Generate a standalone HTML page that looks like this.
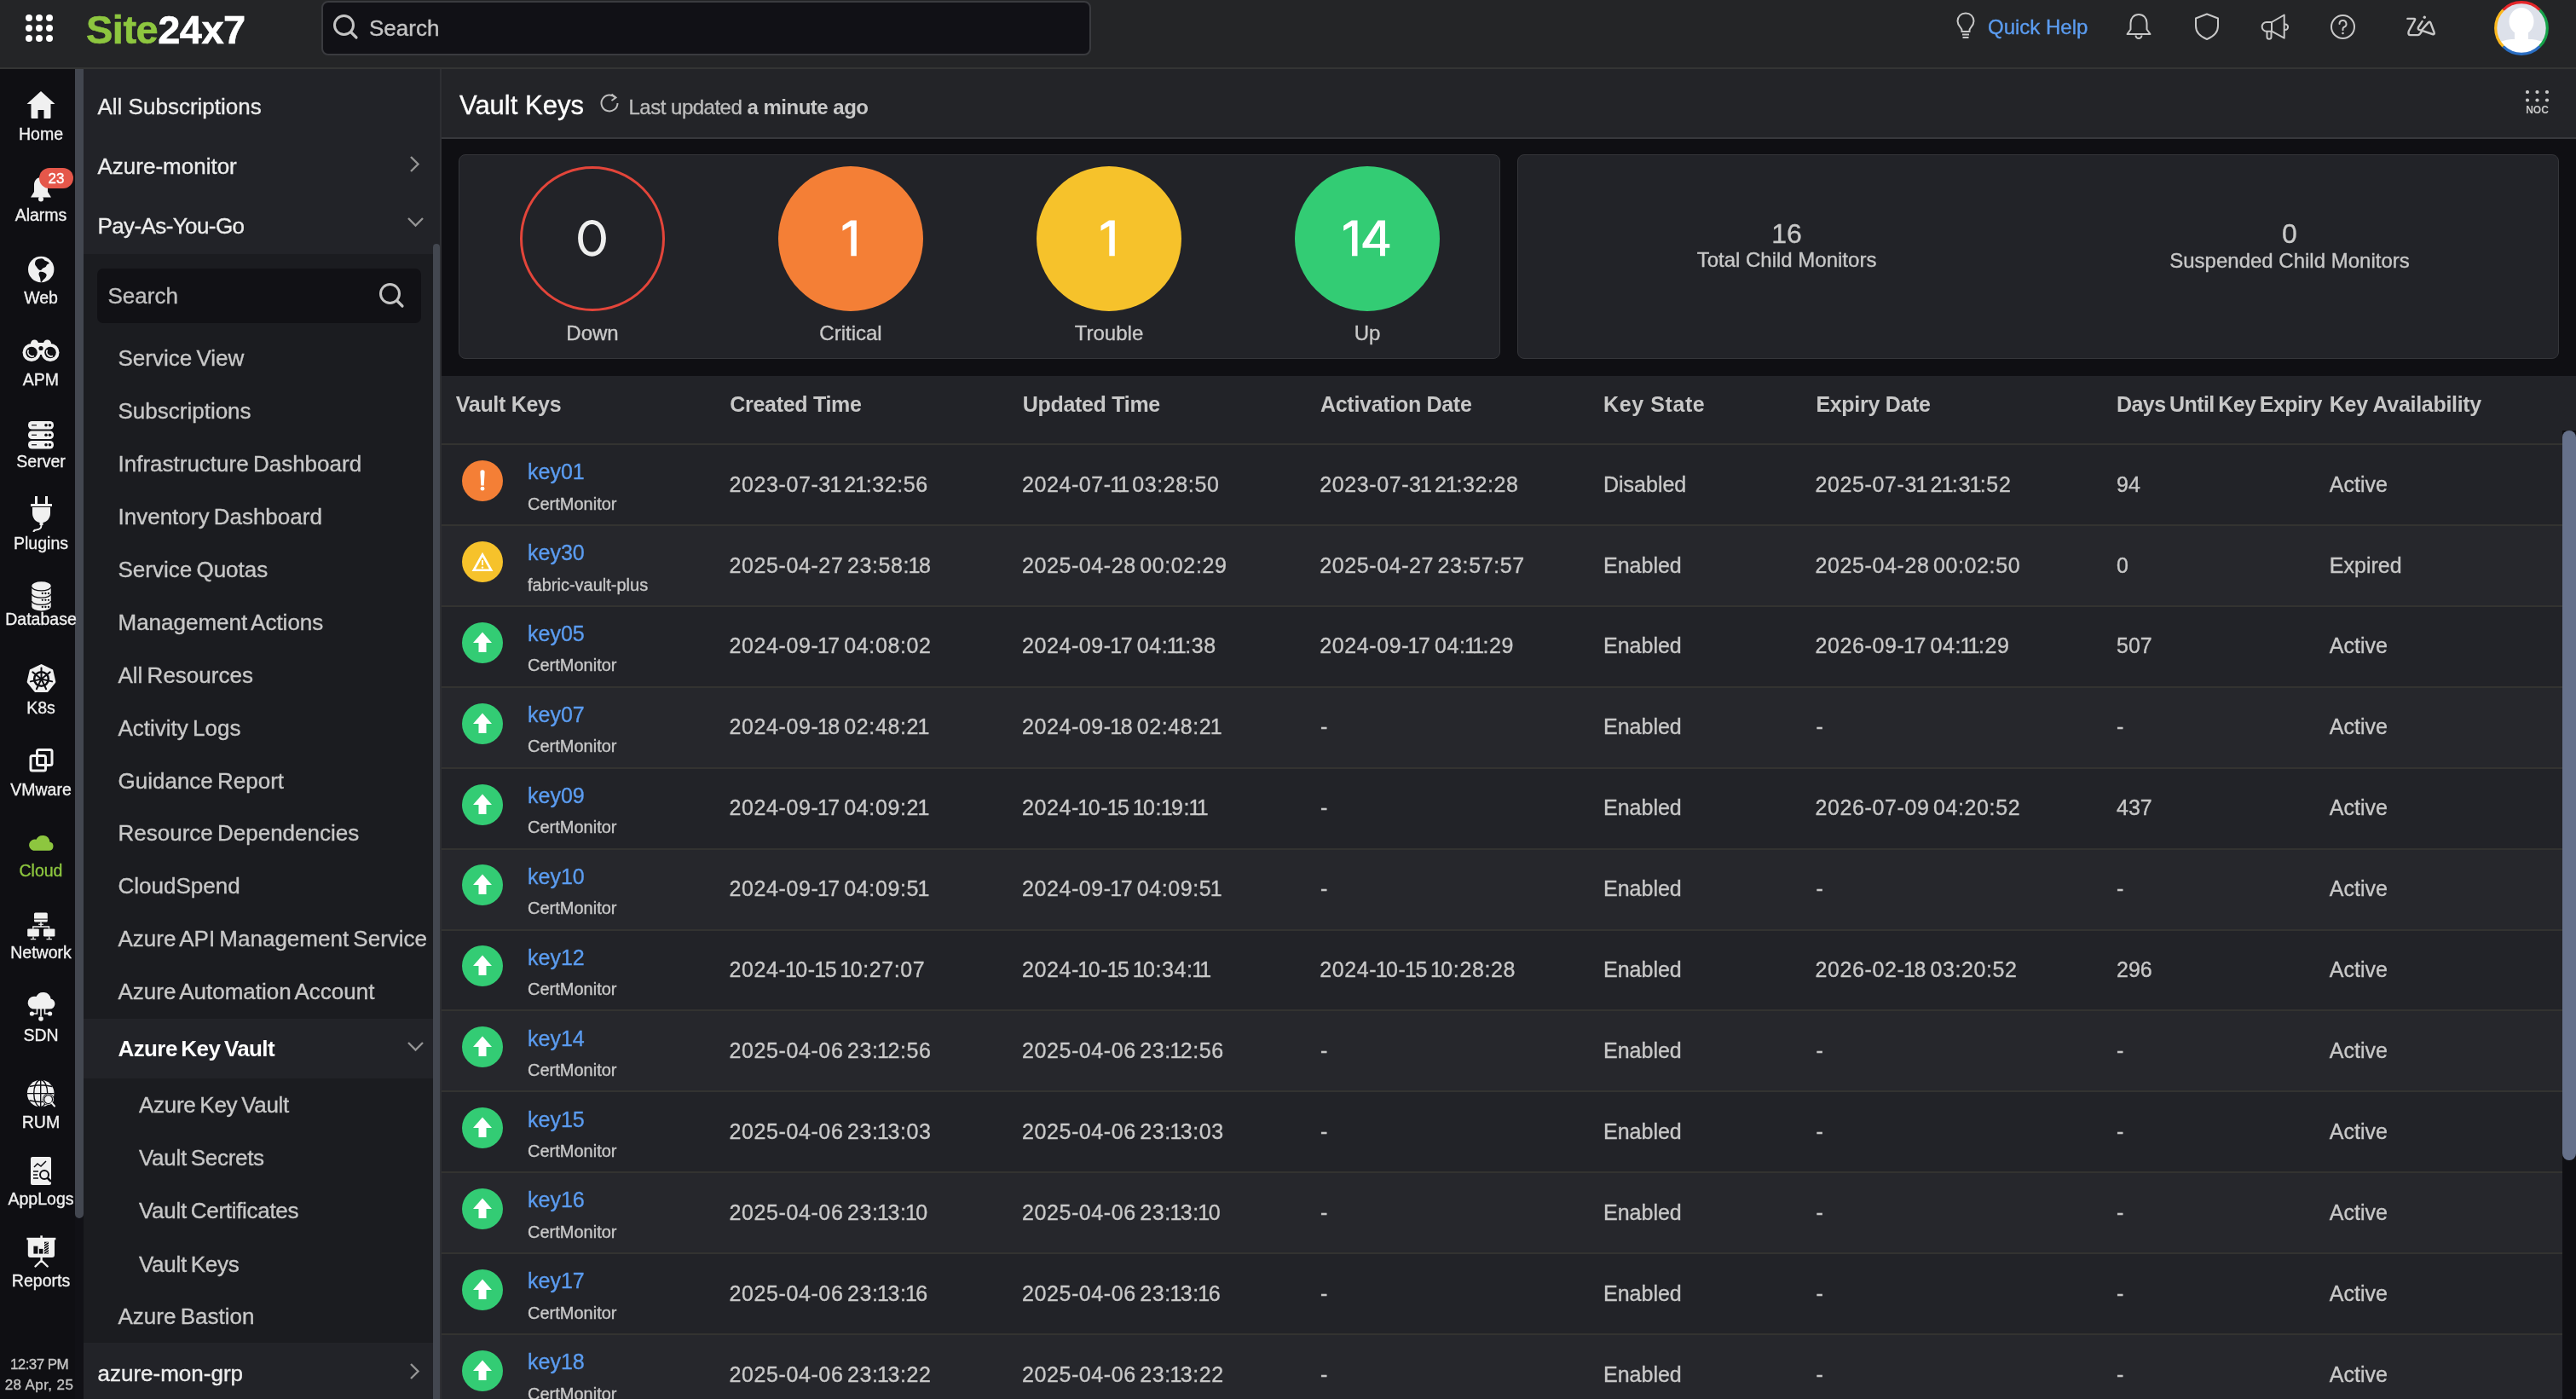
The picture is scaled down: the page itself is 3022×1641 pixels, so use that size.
<!DOCTYPE html>
<html><head><meta charset="utf-8"><style>
html,body{margin:0;padding:0;}
body{width:3022px;height:1641px;overflow:hidden;position:relative;background:#111116;font-family:"Liberation Sans",sans-serif;}
.t{position:absolute;line-height:1;white-space:nowrap;-webkit-text-stroke:0.35px currentColor;}
body>.wrap{position:absolute;left:0;top:0;width:3022px;height:1641px;will-change:transform;}
.r{position:absolute;display:block;}
.n1{letter-spacing:-3px;position:relative;left:-1.5px;}
</style></head><body><div class="wrap">
<div class="r" style="left:0px;top:0px;width:3022px;height:79px;background:#242527;"></div>
<div class="r" style="left:0px;top:79px;width:3022px;height:2px;background:#343534;"></div>
<div class="r" style="left:0px;top:81px;width:88px;height:1560px;background:#0f0f13;"></div>
<div class="r" style="left:88px;top:81px;width:10px;height:1348px;background:#434750;border-radius:0 0 5px 5px"></div>
<div class="r" style="left:98px;top:81px;width:418px;height:1560px;background:#222328;"></div>
<div class="r" style="left:98px;top:298px;width:410px;height:1277px;background:#1b1c20;"></div>
<div class="r" style="left:98px;top:1195px;width:410px;height:70px;background:#222328;"></div>
<div class="r" style="left:508px;top:286px;width:8px;height:1355px;background:#434750;border-radius:4px 4px 0 0"></div>
<div class="r" style="left:516px;top:81px;width:2px;height:1560px;background:#2e2f33;"></div>
<div class="r" style="left:518px;top:81px;width:2504px;height:80px;background:#232428;"></div>
<div class="r" style="left:518px;top:161px;width:2504px;height:2px;background:#37383c;"></div>
<div class="r" style="left:518px;top:163px;width:2504px;height:1478px;background:#0f0f13;"></div>
<svg class="r" style="left:0px;top:0px" width="80" height="70" viewBox="0 0 80 70"><circle cx="34" cy="21" r="4" fill="#fff"/><circle cx="34" cy="33" r="4" fill="#fff"/><circle cx="34" cy="45" r="4" fill="#fff"/><circle cx="46" cy="21" r="4" fill="#fff"/><circle cx="46" cy="33" r="4" fill="#fff"/><circle cx="46" cy="45" r="4" fill="#fff"/><circle cx="58" cy="21" r="4" fill="#fff"/><circle cx="58" cy="33" r="4" fill="#fff"/><circle cx="58" cy="45" r="4" fill="#fff"/></svg>
<div class="t" style="left:101.0px;top:11.2px;font-size:47px;color:#ffffff;font-weight:700;letter-spacing:-0.5px;-webkit-text-stroke:0.6px currentColor"><span style="color:#8dc63f">Site</span>24x7</div>
<div class="r" style="left:377px;top:1px;width:903px;height:64px;background:#111116;box-sizing:border-box;border:2px solid #3a3b3f;border-radius:8px"></div>
<svg class="r" style="left:388px;top:14px" width="36" height="36" viewBox="0 0 36 36"><circle cx="15.5" cy="15.5" r="11" fill="none" stroke="#c4c4c4" stroke-width="3"/><line x1="23.5" y1="23.5" x2="30" y2="30" stroke="#c4c4c4" stroke-width="3.2" stroke-linecap="round"/></svg>
<div class="t" style="left:433.0px;top:20.3px;font-size:26px;color:#c4c4c4;font-weight:400;">Search</div>
<svg class="r" style="left:2290px;top:12px" width="32" height="36" viewBox="0 0 32 36"><path d="M16 3.5c-5.5 0-9.5 4-9.5 9.3 0 3.4 1.8 5.6 3.3 7.3 1 1.1 1.7 2.1 1.7 3.6v1.3h9v-1.3c0-1.5.7-2.5 1.7-3.6 1.5-1.7 3.3-3.9 3.3-7.3 0-5.3-4-9.3-9.5-9.3z" fill="none" stroke="#c8c8c8" stroke-width="2"/><line x1="12" y1="28.5" x2="20" y2="28.5" stroke="#c8c8c8" stroke-width="2"/><line x1="12.5" y1="32" x2="19.5" y2="32" stroke="#c8c8c8" stroke-width="2"/></svg>
<div class="t" style="left:2332.0px;top:19.7px;font-size:24px;color:#5b9cf0;font-weight:400;">Quick Help</div>
<svg class="r" style="left:2490px;top:14px" width="38" height="34" viewBox="0 0 38 34"><path d="M19 3c-5.8 0-9.5 4.2-9.5 10v7.5L5.5 26h27l-4-5.5V13C28.5 7.2 24.8 3 19 3z" fill="none" stroke="#c8c8c8" stroke-width="2" stroke-linejoin="round"/><path d="M15.5 27.5a3.5 3.5 0 0 0 7 0" fill="none" stroke="#c8c8c8" stroke-width="2"/></svg>
<svg class="r" style="left:2572px;top:14px" width="34" height="34" viewBox="0 0 34 34"><path d="M17 2.5L4 7.5v9c0 7.5 5.5 12.5 13 15.5 7.5-3 13-8 13-15.5v-9z" fill="none" stroke="#c8c8c8" stroke-width="2" stroke-linejoin="round"/></svg>
<svg class="r" style="left:2650px;top:16px" width="38" height="32" viewBox="0 0 38 32"><g fill="none" stroke="#c8c8c8" stroke-width="2" stroke-linejoin="round"><path d="M15 10H9a5.35 5.35 0 0 0 0 10.7h6z"/><path d="M15 10L29.7 1.5V28.7L15 20.7z"/><path d="M9.5 20.7v6.5a2.5 2.5 0 0 0 5 0v-6.5"/><path d="M29.7 12.5h1.2a3.2 3.2 0 0 1 0 6.4h-1.2"/></g></svg>
<svg class="r" style="left:2732px;top:15px" width="34" height="34" viewBox="0 0 34 34"><circle cx="16.5" cy="16.5" r="13.5" fill="none" stroke="#c8c8c8" stroke-width="2"/><path d="M12.5 13a4 4 0 1 1 5.5 3.7c-1 .5-1.5 1.2-1.5 2.3v1.2" fill="none" stroke="#c8c8c8" stroke-width="2" stroke-linecap="round"/><circle cx="16.5" cy="24" r="1.3" fill="#c8c8c8"/></svg>
<svg class="r" style="left:2820px;top:14px" width="42" height="34" viewBox="0 0 42 34"><g fill="none" stroke="#c8c8c8" stroke-width="2.4" stroke-linejoin="round" stroke-linecap="round"><path d="M4.4 7.9H12Q13.8 7.9 12.9 9.6L5.8 22.5Q4.6 27.1 7.6 27.1H16.5Q18.5 27.1 20.7 23.4"/><path d="M21.6 11.1L17 18Q16 20.5 18.5 21.2L20.5 21.7"/><path d="M20.5 21.7L28.6 12.6Q30.5 10.5 31.5 13L35.6 24Q36.5 27 33.5 26Z"/></g><circle cx="24.3" cy="6.3" r="1.7" fill="#c8c8c8"/></svg>
<svg class="r" style="left:2924px;top:0px" width="68" height="68" viewBox="0 0 68 68">
<defs><clipPath id="avc"><circle cx="34" cy="33" r="29"/></clipPath></defs>
<circle cx="34" cy="33" r="29.5" fill="#dde1ea"/>
<g clip-path="url(#avc)" fill="#ffffff">
<ellipse cx="34" cy="25" rx="14.5" ry="16"/>
<rect x="26" y="34" width="16" height="14"/>
<path d="M0 56Q6 48 22 46L46 46Q62 48 68 56V70H0z"/>
</g>
<path d="M12.57 11.57A30.3 30.3 0 0 1 55.43 11.57" fill="none" stroke="#e5262a" stroke-width="3.2"/>
<path d="M55.43 11.57A30.3 30.3 0 0 1 55.43 54.43" fill="none" stroke="#16a34a" stroke-width="3.2"/>
<path d="M55.43 54.43A30.3 30.3 0 0 1 12.57 54.43" fill="none" stroke="#2b6fc4" stroke-width="3.2"/>
<path d="M12.57 54.43A30.3 30.3 0 0 1 12.57 11.57" fill="none" stroke="#fbb81e" stroke-width="3.2"/>
</svg>
<svg class="r" style="left:30px;top:105px" width="36" height="36" viewBox="0 0 36 36"><path d="M18 2L1.5 17h5v15.5c0 1 .5 1.5 1.5 1.5h6.5V24h7v10H28c1 0 1.5-.5 1.5-1.5V17h5z" fill="#f0f0f0"/></svg>
<div class="t" style="left:-452.0px;width:1000px;text-align:center;top:147.5px;font-size:19.5px;color:#f0f0f0;font-weight:400;">Home</div>
<svg class="r" style="left:30px;top:204px" width="36" height="36" viewBox="0 0 36 36"><path d="M18 4c-5 0-8 4-8 9v8l-4 6.5h24L26 21v-8c0-5-3-9-8-9z" fill="#f0f0f0"/><circle cx="18" cy="29.5" r="3" fill="#f0f0f0"/></svg>
<div class="r" style="left:46px;top:197px;width:40px;height:24px;background:#e5574a;border-radius:12px"></div>
<div class="t" style="left:-434.0px;width:1000px;text-align:center;top:200.6px;font-size:17px;color:#ffffff;font-weight:400;">23</div>
<div class="t" style="left:-452.0px;width:1000px;text-align:center;top:243.0px;font-size:19.5px;color:#f0f0f0;font-weight:400;">Alarms</div>
<svg class="r" style="left:30px;top:299px" width="36" height="36" viewBox="0 0 36 36"><circle cx="18.2" cy="17" r="15.2" fill="#f0f0f0"/><path d="M12 6.5c2-1.5 5-2.5 8-2 2 .5 1.5 2 3.5 2.5 2 .3 3.5 1.5 4.5 3-1.5.5-3 1-3.5 2.5-.5 2-2.5 2.5-4 3-1.5.7-1.5 2.5-3 2.5-2 0-3-1.5-4-3-1-1.7-2.5-2.5-2.5-4.5 0-1.5.5-3 1-4z" fill="#0f0f13"/><path d="M16.5 20c2-.5 4 0 6 1 1.5 1 2.5 2 2 3.5-.5 2-2 3-3.5 4.5-1 1-1.5 2.5-3 3.3-.7-1.8-.5-3.5-1-5.3-.4-1.8-1.5-3-1.5-4.5 0-1.2.5-2 1-2.5z" fill="#0f0f13"/></svg>
<div class="t" style="left:-452.0px;width:1000px;text-align:center;top:339.5px;font-size:19.5px;color:#f0f0f0;font-weight:400;">Web</div>
<svg class="r" style="left:26px;top:396px" width="44" height="30" viewBox="0 0 44 30"><circle cx="14.5" cy="7" r="4.5" fill="#f0f0f0"/><circle cx="29.5" cy="7" r="4.5" fill="#f0f0f0"/><rect x="12" y="6" width="20" height="14" fill="#f0f0f0"/><circle cx="11" cy="17.5" r="10.5" fill="#f0f0f0"/><circle cx="33" cy="17.5" r="10.5" fill="#f0f0f0"/><circle cx="11" cy="17.5" r="6.8" fill="#0f0f13"/><circle cx="33" cy="17.5" r="6.8" fill="#0f0f13"/><path d="M7.5 14.5a5 5 0 0 0 6.5 7" fill="none" stroke="#f0f0f0" stroke-width="1.6"/><path d="M29.5 14.5a5 5 0 0 0 6.5 7" fill="none" stroke="#f0f0f0" stroke-width="1.6"/><circle cx="22" cy="12.5" r="2.6" fill="#0f0f13"/></svg>
<div class="t" style="left:-452.0px;width:1000px;text-align:center;top:435.9px;font-size:19.5px;color:#f0f0f0;font-weight:400;">APM</div>
<svg class="r" style="left:31px;top:492px" width="36" height="36" viewBox="0 0 36 36"><rect x="2" y="2.0" width="30" height="9.5" rx="4.5" fill="#f0f0f0"/><circle cx="23" cy="6.75" r="1.8" fill="#0f0f13"/><circle cx="27.5" cy="6.75" r="1.8" fill="#0f0f13"/><line x1="6" y1="6.75" x2="12" y2="6.75" stroke="#0f0f13" stroke-width="1.2"/><rect x="2" y="13.5" width="30" height="9.5" rx="4.5" fill="#f0f0f0"/><circle cx="23" cy="18.25" r="1.8" fill="#0f0f13"/><circle cx="27.5" cy="18.25" r="1.8" fill="#0f0f13"/><line x1="6" y1="18.25" x2="12" y2="18.25" stroke="#0f0f13" stroke-width="1.2"/><rect x="2" y="25.0" width="30" height="9.5" rx="4.5" fill="#f0f0f0"/><circle cx="23" cy="29.75" r="1.8" fill="#0f0f13"/><circle cx="27.5" cy="29.75" r="1.8" fill="#0f0f13"/><line x1="6" y1="29.75" x2="12" y2="29.75" stroke="#0f0f13" stroke-width="1.2"/></svg>
<div class="t" style="left:-452.0px;width:1000px;text-align:center;top:532.3px;font-size:19.5px;color:#f0f0f0;font-weight:400;">Server</div>
<svg class="r" style="left:32.2px;top:580px" width="36" height="46" viewBox="0 0 36 46"><rect x="9" y="2" width="3" height="9" fill="#f0f0f0"/><rect x="21" y="2" width="3" height="9" fill="#f0f0f0"/><rect x="4" y="11" width="25" height="3" fill="#f0f0f0"/><path d="M6 15h21v7c0 6-4 10-8.5 11v3h-4v-3C10 32 6 28 6 22z" fill="#f0f0f0"/><path d="M16.5 36c0 4-2 5-6 5.5-2 .2-3 1-3 2.5" fill="none" stroke="#f0f0f0" stroke-width="2"/></svg>
<div class="t" style="left:-452.0px;width:1000px;text-align:center;top:628.3px;font-size:19.5px;color:#f0f0f0;font-weight:400;">Plugins</div>
<svg class="r" style="left:37px;top:682px" width="23" height="36" viewBox="0 0 23 36"><path d="M0.3 5A11.2 4.7 0 0 1 22.7 5V29.8A11.2 4.7 0 0 1 0.3 29.8Z" fill="#f0f0f0"/><path d="M0.3 6.5A11.2 4.3 0 0 0 22.7 6.5" fill="none" stroke="#0f0f13" stroke-width="1.3"/><path d="M0.3 14.8A11.2 4.3 0 0 0 22.7 14.8" fill="none" stroke="#0f0f13" stroke-width="1.3"/><path d="M0.3 23A11.2 4.3 0 0 0 22.7 23" fill="none" stroke="#0f0f13" stroke-width="1.3"/><circle cx="12.8" cy="14" r="1.15" fill="#0f0f13"/><circle cx="16.4" cy="14" r="1.15" fill="#0f0f13"/><circle cx="20" cy="14" r="1.15" fill="#0f0f13"/><circle cx="12.8" cy="21.8" r="1.15" fill="#0f0f13"/><circle cx="16.4" cy="21.8" r="1.15" fill="#0f0f13"/><circle cx="20" cy="21.8" r="1.15" fill="#0f0f13"/><circle cx="12.8" cy="30" r="1.15" fill="#0f0f13"/><circle cx="16.4" cy="30" r="1.15" fill="#0f0f13"/><circle cx="20" cy="30" r="1.15" fill="#0f0f13"/></svg>
<div class="t" style="left:-452.0px;width:1000px;text-align:center;top:716.9px;font-size:19.5px;color:#f0f0f0;font-weight:400;">Database</div>
<svg class="r" style="left:30px;top:778px" width="37" height="37" viewBox="0 0 37 37"><polygon points="18.50,2.30 31.01,8.32 34.10,21.86 25.44,32.72 11.56,32.72 2.90,21.86 5.99,8.32" fill="#f0f0f0" stroke="#f0f0f0" stroke-width="2.5" stroke-linejoin="round"/><circle cx="18.5" cy="18.5" r="8.3" fill="none" stroke="#0f0f13" stroke-width="2.6"/><circle cx="18.5" cy="18.5" r="2.2" fill="#0f0f13"/><line x1="18.50" y1="16.50" x2="18.50" y2="5.50" stroke="#0f0f13" stroke-width="2" stroke-linecap="round"/><line x1="20.06" y1="17.25" x2="28.66" y2="10.39" stroke="#0f0f13" stroke-width="2" stroke-linecap="round"/><line x1="20.45" y1="18.95" x2="31.17" y2="21.39" stroke="#0f0f13" stroke-width="2" stroke-linecap="round"/><line x1="19.37" y1="20.30" x2="24.14" y2="30.21" stroke="#0f0f13" stroke-width="2" stroke-linecap="round"/><line x1="17.63" y1="20.30" x2="12.86" y2="30.21" stroke="#0f0f13" stroke-width="2" stroke-linecap="round"/><line x1="16.55" y1="18.95" x2="5.83" y2="21.39" stroke="#0f0f13" stroke-width="2" stroke-linecap="round"/><line x1="16.94" y1="17.25" x2="8.34" y2="10.39" stroke="#0f0f13" stroke-width="2" stroke-linecap="round"/></svg>
<div class="t" style="left:-452.0px;width:1000px;text-align:center;top:820.5px;font-size:19.5px;color:#f0f0f0;font-weight:400;">K8s</div>
<svg class="r" style="left:30px;top:876px" width="36" height="32" viewBox="0 0 36 32"><rect x="13.5" y="3.5" width="17.5" height="18" rx="2" fill="none" stroke="#f0f0f0" stroke-width="3"/><rect x="6" y="10.5" width="17.5" height="17.5" rx="2" fill="none" stroke="#f0f0f0" stroke-width="3"/></svg>
<div class="t" style="left:-452.0px;width:1000px;text-align:center;top:916.5px;font-size:19.5px;color:#f0f0f0;font-weight:400;">VMware</div>
<svg class="r" style="left:30px;top:975px" width="36" height="26" viewBox="0 0 36 26"><path d="M9 22.7h18.5a5.2 5.2 0 0 0 .8-10.3 8.3 8.3 0 0 0-15.8-2.6A6.5 6.5 0 0 0 9 22.7z" fill="#8dc63f"/></svg>
<div class="t" style="left:-452.0px;width:1000px;text-align:center;top:1012.2px;font-size:19.5px;color:#8dc63f;font-weight:400;">Cloud</div>
<svg class="r" style="left:30px;top:1068px" width="36" height="36" viewBox="0 0 36 36"><rect x="10" y="2.6" width="15.8" height="10.9" rx="1.5" fill="#f0f0f0"/><rect x="10" y="9.6" width="15.8" height="1" fill="#0f0f13"/><path d="M18 13.5V19" stroke="#f0f0f0" stroke-width="1.4"/><rect x="15.2" y="15.6" width="5.6" height="1.3" fill="#f0f0f0"/><path d="M8.8 21.5V19H27.5V21.5" stroke="#f0f0f0" stroke-width="1.4" fill="none"/><rect x="2.2" y="21.4" width="13.6" height="9.1" rx="1.2" fill="#f0f0f0"/><rect x="21" y="21.4" width="13.4" height="9.1" rx="1.2" fill="#f0f0f0"/><path d="M9 30.5V33.6M5.8 33.6H12.2M27.7 30.5V33.6M24.5 33.6H30.9" stroke="#f0f0f0" stroke-width="1.4"/></svg>
<div class="t" style="left:-452.0px;width:1000px;text-align:center;top:1107.5px;font-size:19.5px;color:#f0f0f0;font-weight:400;">Network</div>
<svg class="r" style="left:30px;top:1160px" width="36" height="40" viewBox="0 0 36 40"><path d="M8 23.5h20.5a6 6 0 0 0 1-11.9A9 9 0 0 0 12.5 9 6.8 6.8 0 0 0 8 23.5z" fill="#f0f0f0"/><path d="M18 23V32M13.5 23v6h-6M22.5 23v6h6" stroke="#f0f0f0" stroke-width="1.6" fill="none"/><circle cx="18" cy="35" r="2.8" fill="#f0f0f0"/><circle cx="7.4" cy="29" r="2.6" fill="#f0f0f0"/><circle cx="28.6" cy="29" r="2.6" fill="#f0f0f0"/></svg>
<div class="t" style="left:-452.0px;width:1000px;text-align:center;top:1204.5px;font-size:19.5px;color:#f0f0f0;font-weight:400;">SDN</div>
<svg class="r" style="left:30px;top:1264px" width="38" height="38" viewBox="0 0 38 38"><circle cx="17.7" cy="18.6" r="15.8" fill="#f0f0f0"/><g stroke="#0f0f13" fill="none" stroke-width="1.4"><path d="M2 18.6H33.5M17.7 2.8V34.4M4.5 10.5Q17.7 7 31 10.5M4.5 26.7Q17.7 30.2 31 26.7"/><ellipse cx="17.7" cy="18.6" rx="8" ry="15.8"/></g><circle cx="26.7" cy="25.6" r="7" fill="#0f0f13"/><circle cx="26.7" cy="25.6" r="5" fill="#f0f0f0" stroke="#0f0f13" stroke-width="1.4"/><circle cx="26.7" cy="25.6" r="5.9" fill="none" stroke="#f0f0f0" stroke-width="0.9"/><path d="M30.5 29.5L34 33.5" stroke="#f0f0f0" stroke-width="2" stroke-linecap="round"/></svg>
<div class="t" style="left:-452.0px;width:1000px;text-align:center;top:1306.7px;font-size:19.5px;color:#f0f0f0;font-weight:400;">RUM</div>
<svg class="r" style="left:35.3px;top:1356px" width="30" height="36" viewBox="0 0 30 36"><rect x="1" y="1" width="24" height="33" rx="2" fill="#f0f0f0"/><path d="M5 13l4-4 4 3 6-6" stroke="#0f0f13" stroke-width="1.5" fill="none"/><path d="M4 18h6M4 22h5M4 26h6" stroke="#0f0f13" stroke-width="1.4"/><circle cx="17" cy="22" r="5" fill="none" stroke="#0f0f13" stroke-width="2"/><line x1="20.5" y1="25.5" x2="25" y2="30" stroke="#0f0f13" stroke-width="2.5"/></svg>
<div class="t" style="left:-452.0px;width:1000px;text-align:center;top:1396.5px;font-size:19.5px;color:#f0f0f0;font-weight:400;">AppLogs</div>
<svg class="r" style="left:30px;top:1449px" width="38" height="40" viewBox="0 0 38 40"><defs><clipPath id="b3"><rect x="22" y="7.7" width="5" height="13.9"/></clipPath></defs><rect x="1.4" y="2.8" width="34" height="2.6" fill="#f0f0f0"/><rect x="17.3" y="0.3" width="2.6" height="3" fill="#f0f0f0"/><path d="M2.8 5H34V23A3 3 0 0 1 31 26H5.8A3 3 0 0 1 2.8 23Z" fill="#f0f0f0"/><rect x="9.4" y="12.7" width="5" height="8.9" fill="#0f0f13"/><rect x="15.9" y="15.9" width="4.6" height="5.7" fill="#0f0f13"/><rect x="22" y="7.7" width="5" height="13.9" fill="#0f0f13"/><g clip-path="url(#b3)" stroke="#f0f0f0" stroke-width="1"><path d="M20 12l9-6M20 15l9-6M20 18l9-6M20 21l9-6M20 24l9-6M20 27l9-6"/></g><path d="M18.6 26v3.5M18.6 29.5L11.5 36.5M18.6 29.5L25.7 36.5" stroke="#f0f0f0" stroke-width="2.4" fill="none" stroke-linecap="round"/></svg>
<div class="t" style="left:-452.0px;width:1000px;text-align:center;top:1493.0px;font-size:19.5px;color:#f0f0f0;font-weight:400;">Reports</div>
<div class="t" style="left:-454.0px;width:1000px;text-align:center;top:1591.6px;font-size:17px;color:#c4c4c4;font-weight:400;letter-spacing:-0.6px">12:37 PM</div>
<div class="t" style="left:-454.0px;width:1000px;text-align:center;top:1615.6px;font-size:17px;color:#c4c4c4;font-weight:400;letter-spacing:0.4px">28 Apr, 25</div>
<div class="t" style="left:114.5px;top:112.2px;font-size:26px;color:#ececec;font-weight:400;">All Subscriptions</div>
<div class="t" style="left:114.5px;top:181.5px;font-size:26px;color:#ececec;font-weight:400;">Azure-monitor</div>
<div class="t" style="left:114.5px;top:252.0px;font-size:26px;color:#ececec;font-weight:400;letter-spacing:-0.6px">Pay-As-You-Go</div>
<svg class="r" style="left:480px;top:182px" width="14" height="21" viewBox="0 0 14 21"><path d="M2 2l8.5 8.5-8.5 8.5" fill="none" stroke="#959595" stroke-width="2.4"/></svg>
<svg class="r" style="left:477px;top:254px" width="21" height="14" viewBox="0 0 21 14"><path d="M2 2l8.5 8.5 8.5-8.5" fill="none" stroke="#959595" stroke-width="2.4"/></svg>
<div class="r" style="left:114px;top:315px;width:380px;height:64px;background:#111115;border-radius:7px"></div>
<div class="t" style="left:126.5px;top:334.0px;font-size:26px;color:#c0c0c0;font-weight:400;">Search</div>
<svg class="r" style="left:442px;top:329px" width="36" height="36" viewBox="0 0 36 36"><circle cx="15.5" cy="15.5" r="11" fill="none" stroke="#c4c4c4" stroke-width="3"/><line x1="23.5" y1="23.5" x2="30" y2="30" stroke="#c4c4c4" stroke-width="3.2" stroke-linecap="round"/></svg>
<div class="t" style="left:138.5px;top:407.3px;font-size:26px;color:#c8c8c8;font-weight:400;word-spacing:-2px">Service View</div>
<div class="t" style="left:138.5px;top:469.2px;font-size:26px;color:#c8c8c8;font-weight:400;word-spacing:-2px">Subscriptions</div>
<div class="t" style="left:138.5px;top:531.1px;font-size:26px;color:#c8c8c8;font-weight:400;word-spacing:-2px">Infrastructure Dashboard</div>
<div class="t" style="left:138.5px;top:593.0px;font-size:26px;color:#c8c8c8;font-weight:400;word-spacing:-2px">Inventory Dashboard</div>
<div class="t" style="left:138.5px;top:654.9px;font-size:26px;color:#c8c8c8;font-weight:400;word-spacing:-2px">Service Quotas</div>
<div class="t" style="left:138.5px;top:716.8px;font-size:26px;color:#c8c8c8;font-weight:400;word-spacing:-2px">Management Actions</div>
<div class="t" style="left:138.5px;top:778.7px;font-size:26px;color:#c8c8c8;font-weight:400;word-spacing:-2px">All Resources</div>
<div class="t" style="left:138.5px;top:840.6px;font-size:26px;color:#c8c8c8;font-weight:400;word-spacing:-2px">Activity Logs</div>
<div class="t" style="left:138.5px;top:902.5px;font-size:26px;color:#c8c8c8;font-weight:400;word-spacing:-2px">Guidance Report</div>
<div class="t" style="left:138.5px;top:964.4px;font-size:26px;color:#c8c8c8;font-weight:400;word-spacing:-2px">Resource Dependencies</div>
<div class="t" style="left:138.5px;top:1026.3px;font-size:26px;color:#c8c8c8;font-weight:400;word-spacing:-2px">CloudSpend</div>
<div class="t" style="left:138.5px;top:1088.2px;font-size:26px;color:#c8c8c8;font-weight:400;word-spacing:-2px">Azure API Management Service</div>
<div class="t" style="left:138.5px;top:1150.1px;font-size:26px;color:#c8c8c8;font-weight:400;word-spacing:-2px">Azure Automation Account</div>
<div class="t" style="left:138.5px;top:1216.5px;font-size:26px;color:#ffffff;font-weight:700;letter-spacing:-0.6px;word-spacing:-2px;-webkit-text-stroke:0">Azure Key Vault</div>
<svg class="r" style="left:477px;top:1220.5px" width="21" height="14" viewBox="0 0 21 14"><path d="M2 2l8.5 8.5 8.5-8.5" fill="none" stroke="#959595" stroke-width="2.4"/></svg>
<div class="t" style="left:163.0px;top:1283.0px;font-size:26px;color:#c8c8c8;font-weight:400;letter-spacing:-0.3px;word-spacing:-2px">Azure Key Vault</div>
<div class="t" style="left:163.0px;top:1345.2px;font-size:26px;color:#c8c8c8;font-weight:400;letter-spacing:-0.3px;word-spacing:-2px">Vault Secrets</div>
<div class="t" style="left:163.0px;top:1407.4px;font-size:26px;color:#c8c8c8;font-weight:400;letter-spacing:-0.3px;word-spacing:-2px">Vault Certificates</div>
<div class="t" style="left:163.0px;top:1469.6px;font-size:26px;color:#c8c8c8;font-weight:400;letter-spacing:-0.3px;word-spacing:-2px">Vault Keys</div>
<div class="t" style="left:138.5px;top:1531.0px;font-size:26px;color:#c8c8c8;font-weight:400;word-spacing:-2px">Azure Bastion</div>
<div class="t" style="left:114.5px;top:1598.0px;font-size:26px;color:#ececec;font-weight:400;">azure-mon-grp</div>
<svg class="r" style="left:480px;top:1598px" width="14" height="21" viewBox="0 0 14 21"><path d="M2 2l8.5 8.5-8.5 8.5" fill="none" stroke="#959595" stroke-width="2.4"/></svg>
<div class="t" style="left:539.0px;top:108.1px;font-size:31px;color:#ffffff;font-weight:400;">Vault Keys</div>
<svg class="r" style="left:702px;top:108px" width="26" height="26" viewBox="0 0 26 26"><path d="M20 6.5A9.5 9.5 0 1 0 22.5 13" fill="none" stroke="#bdbdbd" stroke-width="2"/><path d="M15.5 2.5l5 4-5 3.5" fill="none" stroke="#bdbdbd" stroke-width="2"/></svg>
<div class="t" style="left:737.5px;top:114.0px;font-size:24px;color:#bdbdbd;font-weight:400;letter-spacing:-0.5px">Last updated <b style="color:#c9c9c9;-webkit-text-stroke:0">a minute ago</b></div>
<svg class="r" style="left:2963px;top:106px" width="28" height="14" viewBox="0 0 28 14"><circle cx="2.0" cy="2.0" r="2.1" fill="#c8c8c8"/><circle cx="2.0" cy="11.5" r="2.1" fill="#c8c8c8"/><circle cx="13.5" cy="2.0" r="2.1" fill="#c8c8c8"/><circle cx="13.5" cy="11.5" r="2.1" fill="#c8c8c8"/><circle cx="25.0" cy="2.0" r="2.1" fill="#c8c8c8"/><circle cx="25.0" cy="11.5" r="2.1" fill="#c8c8c8"/></svg>
<div class="t" style="left:2476.5px;width:1000px;text-align:center;top:122.8px;font-size:12px;color:#c8c8c8;font-weight:700;-webkit-text-stroke:0">NOC</div>
<div class="r" style="left:538px;top:181px;width:1222px;height:240px;background:#222328;box-sizing:border-box;border:1px solid #35363a;border-radius:8px"></div>
<div class="r" style="left:1780px;top:181px;width:1222px;height:240px;background:#222328;box-sizing:border-box;border:1px solid #35363a;border-radius:8px"></div>
<div class="r" style="left:610px;top:195px;width:170px;height:170px;background:transparent;box-sizing:border-box;border:3px solid #e3453a;border-radius:50%"></div>
<svg class="r" style="left:660px;top:250px" width="70" height="60" viewBox="0 0 70 60"><path d="M18.10 29.30C18.10 16.89 24.99 7.90 34.50 7.90C44.01 7.90 50.90 16.89 50.90 29.30C50.90 41.71 44.01 50.70 34.50 50.70C24.99 50.70 18.10 41.71 18.10 29.30ZM23.80 29.30C23.80 19.52 28.08 13.00 34.50 13.00C40.92 13.00 45.20 19.52 45.20 29.30C45.20 39.08 40.92 45.60 34.50 45.60C28.08 45.60 23.80 39.08 23.80 29.30Z" fill="#eeeeee" fill-rule="evenodd"/></svg>
<div class="t" style="left:195.0px;width:1000px;text-align:center;top:378.5px;font-size:24px;color:#c8c8c8;font-weight:400;">Down</div>
<div class="r" style="left:913px;top:195px;width:170px;height:170px;background:#f47f36;border-radius:50%"></div>
<svg class="r" style="left:978px;top:250px" width="40" height="60" viewBox="978 250 40 60"><path d="M998.0 258.5H1004.8V300.2H998.3V265.0L988.5 270.8V264.8Z" fill="#ffffff"/></svg>
<div class="t" style="left:498.0px;width:1000px;text-align:center;top:378.5px;font-size:24px;color:#c8c8c8;font-weight:400;">Critical</div>
<div class="r" style="left:1216px;top:195px;width:170px;height:170px;background:#f6c22b;border-radius:50%"></div>
<svg class="r" style="left:1281px;top:250px" width="40" height="60" viewBox="1281 250 40 60"><path d="M1301.0 258.5H1307.8V300.2H1301.3V265.0L1291.5 270.8V264.8Z" fill="#ffffff"/></svg>
<div class="t" style="left:801.0px;width:1000px;text-align:center;top:378.5px;font-size:24px;color:#c8c8c8;font-weight:400;">Trouble</div>
<div class="r" style="left:1519px;top:195px;width:170px;height:170px;background:#33cc74;border-radius:50%"></div>
<svg class="r" style="left:1560px;top:250px" width="80" height="60" viewBox="1560 250 80 60"><path d="M1585.7 258.5H1592.5V300.2H1586.0V265.0L1576.2 270.8V264.8Z" fill="#ffffff"/><path d="M1616.5 258.5H1625V286H1630.3V290.8H1625V300.2H1619V290.8H1598.5V286ZM1619 265L1606.3 286H1619Z" fill="#ffffff" fill-rule="evenodd"/></svg>
<div class="t" style="left:1104.0px;width:1000px;text-align:center;top:378.5px;font-size:24px;color:#c8c8c8;font-weight:400;">Up</div>
<div class="t" style="left:1596.0px;width:1000px;text-align:center;top:258.1px;font-size:32px;color:#c8c8c8;font-weight:400;">16</div>
<div class="t" style="left:1596.0px;width:1000px;text-align:center;top:293.4px;font-size:24px;color:#c8c8c8;font-weight:400;">Total Child Monitors</div>
<div class="t" style="left:2186.0px;width:1000px;text-align:center;top:258.1px;font-size:32px;color:#c8c8c8;font-weight:400;">0</div>
<div class="t" style="left:2186.0px;width:1000px;text-align:center;top:294.0px;font-size:24px;color:#c8c8c8;font-weight:400;">Suspended Child Monitors</div>
<div class="r" style="left:518px;top:441px;width:2488px;height:1200px;background:#222328;"></div>
<div class="r" style="left:3006px;top:441px;width:16px;height:64px;background:#222328;"></div>
<div class="r" style="left:3006px;top:505px;width:16px;height:1136px;background:#0f0f13;"></div>
<div class="r" style="left:518px;top:520px;width:2488px;height:2px;background:#333331;"></div>
<div class="t" style="left:534.8px;top:462.1px;font-size:25px;color:#c8c8c8;font-weight:700;letter-spacing:-0.3px;-webkit-text-stroke:0">Vault Keys</div>
<div class="t" style="left:856.3px;top:462.1px;font-size:25px;color:#c8c8c8;font-weight:700;letter-spacing:-0.3px;-webkit-text-stroke:0">Created Time</div>
<div class="t" style="left:1199.7px;top:462.1px;font-size:25px;color:#c8c8c8;font-weight:700;letter-spacing:-0.3px;-webkit-text-stroke:0">Updated Time</div>
<div class="t" style="left:1549.0px;top:462.1px;font-size:25px;color:#c8c8c8;font-weight:700;letter-spacing:-0.3px;-webkit-text-stroke:0">Activation Date</div>
<div class="t" style="left:1881.0px;top:462.1px;font-size:25px;color:#c8c8c8;font-weight:700;letter-spacing:0.6px;-webkit-text-stroke:0">Key State</div>
<div class="t" style="left:2130.4px;top:462.1px;font-size:25px;color:#c8c8c8;font-weight:700;letter-spacing:-0.3px;-webkit-text-stroke:0">Expiry Date</div>
<div class="t" style="left:2483.0px;top:462.1px;font-size:25px;color:#c8c8c8;font-weight:700;letter-spacing:-0.55px;-webkit-text-stroke:0;word-spacing:-2px">Days Until Key Expiry</div>
<div class="t" style="left:2732.8px;top:462.1px;font-size:25px;color:#c8c8c8;font-weight:700;letter-spacing:-0.3px;-webkit-text-stroke:0">Key Availability</div>
<div class="r" style="left:518px;top:615px;width:2488px;height:2px;background:#333331;"></div>
<svg class="r" style="left:542px;top:540px" width="48" height="48" viewBox="0 0 48 48"><circle cx="24" cy="24" r="24" fill="#f47f36"/><path d="M21.4 13.8a2.6 2.6 0 0 1 5.2 0l-.9 15.6h-3.4z" fill="#fff"/><circle cx="24" cy="33.2" r="2.4" fill="#fff"/></svg>
<div class="t" style="left:619.0px;top:541.3px;font-size:25px;color:#5b9cf0;font-weight:400;">key01</div>
<div class="t" style="left:619.0px;top:580.6px;font-size:20px;color:#c8c8c8;font-weight:400;">CertMonitor</div>
<div class="t" style="left:855.5px;top:555.6px;font-size:25px;color:#c8c8c8;font-weight:400;letter-spacing:0.6px;word-spacing:-3px">2023-07-3<span class="n1">1</span> 2<span class="n1">1</span>:32:56</div>
<div class="t" style="left:1198.9px;top:555.6px;font-size:25px;color:#c8c8c8;font-weight:400;letter-spacing:0.6px;word-spacing:-3px">2024-07-<span class="n1">1</span><span class="n1">1</span> 03:28:50</div>
<div class="t" style="left:1548.2px;top:555.6px;font-size:25px;color:#c8c8c8;font-weight:400;letter-spacing:0.6px;word-spacing:-3px">2023-07-3<span class="n1">1</span> 2<span class="n1">1</span>:32:28</div>
<div class="t" style="left:1881.0px;top:555.6px;font-size:25px;color:#c8c8c8;font-weight:400;">Disabled</div>
<div class="t" style="left:2129.6px;top:555.6px;font-size:25px;color:#c8c8c8;font-weight:400;letter-spacing:0.6px;word-spacing:-3px">2025-07-3<span class="n1">1</span> 2<span class="n1">1</span>:3<span class="n1">1</span>:52</div>
<div class="t" style="left:2483.0px;top:555.6px;font-size:25px;color:#c8c8c8;font-weight:400;">94</div>
<div class="t" style="left:2732.8px;top:555.6px;font-size:25px;color:#c8c8c8;font-weight:400;">Active</div>
<div class="r" style="left:518px;top:617px;width:2488px;height:93px;background:#26272c;"></div>
<div class="r" style="left:518px;top:710px;width:2488px;height:2px;background:#333331;"></div>
<svg class="r" style="left:542px;top:635px" width="48" height="48" viewBox="0 0 48 48"><circle cx="24" cy="24" r="24" fill="#f6c22b"/><path d="M24 15.5L13.8 33.8h20.4z" fill="none" stroke="#fff" stroke-width="2.6" stroke-linejoin="miter"/><path d="M24 22v6" stroke="#fff" stroke-width="2"/><circle cx="24" cy="30.6" r="1.2" fill="#fff"/></svg>
<div class="t" style="left:619.0px;top:636.2px;font-size:25px;color:#5b9cf0;font-weight:400;">key30</div>
<div class="t" style="left:619.0px;top:675.5px;font-size:20px;color:#c8c8c8;font-weight:400;">fabric-vault-plus</div>
<div class="t" style="left:855.5px;top:650.5px;font-size:25px;color:#c8c8c8;font-weight:400;letter-spacing:0.6px;word-spacing:-3px">2025-04-27 23:58:<span class="n1">1</span>8</div>
<div class="t" style="left:1198.9px;top:650.5px;font-size:25px;color:#c8c8c8;font-weight:400;letter-spacing:0.6px;word-spacing:-3px">2025-04-28 00:02:29</div>
<div class="t" style="left:1548.2px;top:650.5px;font-size:25px;color:#c8c8c8;font-weight:400;letter-spacing:0.6px;word-spacing:-3px">2025-04-27 23:57:57</div>
<div class="t" style="left:1881.0px;top:650.5px;font-size:25px;color:#c8c8c8;font-weight:400;">Enabled</div>
<div class="t" style="left:2129.6px;top:650.5px;font-size:25px;color:#c8c8c8;font-weight:400;letter-spacing:0.6px;word-spacing:-3px">2025-04-28 00:02:50</div>
<div class="t" style="left:2483.0px;top:650.5px;font-size:25px;color:#c8c8c8;font-weight:400;">0</div>
<div class="t" style="left:2732.8px;top:650.5px;font-size:25px;color:#c8c8c8;font-weight:400;">Expired</div>
<div class="r" style="left:518px;top:805px;width:2488px;height:2px;background:#333331;"></div>
<svg class="r" style="left:542px;top:730px" width="48" height="48" viewBox="0 0 48 48"><circle cx="24" cy="24" r="24" fill="#33cc74"/><path d="M24 11.5L13 24h6.5v11h9V24H35z" fill="#fff"/></svg>
<div class="t" style="left:619.0px;top:731.1px;font-size:25px;color:#5b9cf0;font-weight:400;">key05</div>
<div class="t" style="left:619.0px;top:770.4px;font-size:20px;color:#c8c8c8;font-weight:400;">CertMonitor</div>
<div class="t" style="left:855.5px;top:745.4px;font-size:25px;color:#c8c8c8;font-weight:400;letter-spacing:0.6px;word-spacing:-3px">2024-09-<span class="n1">1</span>7 04:08:02</div>
<div class="t" style="left:1198.9px;top:745.4px;font-size:25px;color:#c8c8c8;font-weight:400;letter-spacing:0.6px;word-spacing:-3px">2024-09-<span class="n1">1</span>7 04:<span class="n1">1</span><span class="n1">1</span>:38</div>
<div class="t" style="left:1548.2px;top:745.4px;font-size:25px;color:#c8c8c8;font-weight:400;letter-spacing:0.6px;word-spacing:-3px">2024-09-<span class="n1">1</span>7 04:<span class="n1">1</span><span class="n1">1</span>:29</div>
<div class="t" style="left:1881.0px;top:745.4px;font-size:25px;color:#c8c8c8;font-weight:400;">Enabled</div>
<div class="t" style="left:2129.6px;top:745.4px;font-size:25px;color:#c8c8c8;font-weight:400;letter-spacing:0.6px;word-spacing:-3px">2026-09-<span class="n1">1</span>7 04:<span class="n1">1</span><span class="n1">1</span>:29</div>
<div class="t" style="left:2483.0px;top:745.4px;font-size:25px;color:#c8c8c8;font-weight:400;">507</div>
<div class="t" style="left:2732.8px;top:745.4px;font-size:25px;color:#c8c8c8;font-weight:400;">Active</div>
<div class="r" style="left:518px;top:807px;width:2488px;height:93px;background:#26272c;"></div>
<div class="r" style="left:518px;top:900px;width:2488px;height:2px;background:#333331;"></div>
<svg class="r" style="left:542px;top:825px" width="48" height="48" viewBox="0 0 48 48"><circle cx="24" cy="24" r="24" fill="#33cc74"/><path d="M24 11.5L13 24h6.5v11h9V24H35z" fill="#fff"/></svg>
<div class="t" style="left:619.0px;top:826.0px;font-size:25px;color:#5b9cf0;font-weight:400;">key07</div>
<div class="t" style="left:619.0px;top:865.3px;font-size:20px;color:#c8c8c8;font-weight:400;">CertMonitor</div>
<div class="t" style="left:855.5px;top:840.3px;font-size:25px;color:#c8c8c8;font-weight:400;letter-spacing:0.6px;word-spacing:-3px">2024-09-<span class="n1">1</span>8 02:48:2<span class="n1">1</span></div>
<div class="t" style="left:1198.9px;top:840.3px;font-size:25px;color:#c8c8c8;font-weight:400;letter-spacing:0.6px;word-spacing:-3px">2024-09-<span class="n1">1</span>8 02:48:2<span class="n1">1</span></div>
<div class="t" style="left:1549.0px;top:840.3px;font-size:25px;color:#c8c8c8;font-weight:400;">-</div>
<div class="t" style="left:1881.0px;top:840.3px;font-size:25px;color:#c8c8c8;font-weight:400;">Enabled</div>
<div class="t" style="left:2130.4px;top:840.3px;font-size:25px;color:#c8c8c8;font-weight:400;">-</div>
<div class="t" style="left:2483.0px;top:840.3px;font-size:25px;color:#c8c8c8;font-weight:400;">-</div>
<div class="t" style="left:2732.8px;top:840.3px;font-size:25px;color:#c8c8c8;font-weight:400;">Active</div>
<div class="r" style="left:518px;top:995px;width:2488px;height:2px;background:#333331;"></div>
<svg class="r" style="left:542px;top:920px" width="48" height="48" viewBox="0 0 48 48"><circle cx="24" cy="24" r="24" fill="#33cc74"/><path d="M24 11.5L13 24h6.5v11h9V24H35z" fill="#fff"/></svg>
<div class="t" style="left:619.0px;top:920.9px;font-size:25px;color:#5b9cf0;font-weight:400;">key09</div>
<div class="t" style="left:619.0px;top:960.2px;font-size:20px;color:#c8c8c8;font-weight:400;">CertMonitor</div>
<div class="t" style="left:855.5px;top:935.2px;font-size:25px;color:#c8c8c8;font-weight:400;letter-spacing:0.6px;word-spacing:-3px">2024-09-<span class="n1">1</span>7 04:09:2<span class="n1">1</span></div>
<div class="t" style="left:1198.9px;top:935.2px;font-size:25px;color:#c8c8c8;font-weight:400;letter-spacing:0.6px;word-spacing:-3px">2024-<span class="n1">1</span>0-<span class="n1">1</span>5 <span class="n1">1</span>0:<span class="n1">1</span>9:<span class="n1">1</span><span class="n1">1</span></div>
<div class="t" style="left:1549.0px;top:935.2px;font-size:25px;color:#c8c8c8;font-weight:400;">-</div>
<div class="t" style="left:1881.0px;top:935.2px;font-size:25px;color:#c8c8c8;font-weight:400;">Enabled</div>
<div class="t" style="left:2129.6px;top:935.2px;font-size:25px;color:#c8c8c8;font-weight:400;letter-spacing:0.6px;word-spacing:-3px">2026-07-09 04:20:52</div>
<div class="t" style="left:2483.0px;top:935.2px;font-size:25px;color:#c8c8c8;font-weight:400;">437</div>
<div class="t" style="left:2732.8px;top:935.2px;font-size:25px;color:#c8c8c8;font-weight:400;">Active</div>
<div class="r" style="left:518px;top:997px;width:2488px;height:93px;background:#26272c;"></div>
<div class="r" style="left:518px;top:1090px;width:2488px;height:2px;background:#333331;"></div>
<svg class="r" style="left:542px;top:1014px" width="48" height="48" viewBox="0 0 48 48"><circle cx="24" cy="24" r="24" fill="#33cc74"/><path d="M24 11.5L13 24h6.5v11h9V24H35z" fill="#fff"/></svg>
<div class="t" style="left:619.0px;top:1015.8px;font-size:25px;color:#5b9cf0;font-weight:400;">key10</div>
<div class="t" style="left:619.0px;top:1055.1px;font-size:20px;color:#c8c8c8;font-weight:400;">CertMonitor</div>
<div class="t" style="left:855.5px;top:1030.1px;font-size:25px;color:#c8c8c8;font-weight:400;letter-spacing:0.6px;word-spacing:-3px">2024-09-<span class="n1">1</span>7 04:09:5<span class="n1">1</span></div>
<div class="t" style="left:1198.9px;top:1030.1px;font-size:25px;color:#c8c8c8;font-weight:400;letter-spacing:0.6px;word-spacing:-3px">2024-09-<span class="n1">1</span>7 04:09:5<span class="n1">1</span></div>
<div class="t" style="left:1549.0px;top:1030.1px;font-size:25px;color:#c8c8c8;font-weight:400;">-</div>
<div class="t" style="left:1881.0px;top:1030.1px;font-size:25px;color:#c8c8c8;font-weight:400;">Enabled</div>
<div class="t" style="left:2130.4px;top:1030.1px;font-size:25px;color:#c8c8c8;font-weight:400;">-</div>
<div class="t" style="left:2483.0px;top:1030.1px;font-size:25px;color:#c8c8c8;font-weight:400;">-</div>
<div class="t" style="left:2732.8px;top:1030.1px;font-size:25px;color:#c8c8c8;font-weight:400;">Active</div>
<div class="r" style="left:518px;top:1184px;width:2488px;height:2px;background:#333331;"></div>
<svg class="r" style="left:542px;top:1109px" width="48" height="48" viewBox="0 0 48 48"><circle cx="24" cy="24" r="24" fill="#33cc74"/><path d="M24 11.5L13 24h6.5v11h9V24H35z" fill="#fff"/></svg>
<div class="t" style="left:619.0px;top:1110.7px;font-size:25px;color:#5b9cf0;font-weight:400;">key12</div>
<div class="t" style="left:619.0px;top:1150.0px;font-size:20px;color:#c8c8c8;font-weight:400;">CertMonitor</div>
<div class="t" style="left:855.5px;top:1125.0px;font-size:25px;color:#c8c8c8;font-weight:400;letter-spacing:0.6px;word-spacing:-3px">2024-<span class="n1">1</span>0-<span class="n1">1</span>5 <span class="n1">1</span>0:27:07</div>
<div class="t" style="left:1198.9px;top:1125.0px;font-size:25px;color:#c8c8c8;font-weight:400;letter-spacing:0.6px;word-spacing:-3px">2024-<span class="n1">1</span>0-<span class="n1">1</span>5 <span class="n1">1</span>0:34:<span class="n1">1</span><span class="n1">1</span></div>
<div class="t" style="left:1548.2px;top:1125.0px;font-size:25px;color:#c8c8c8;font-weight:400;letter-spacing:0.6px;word-spacing:-3px">2024-<span class="n1">1</span>0-<span class="n1">1</span>5 <span class="n1">1</span>0:28:28</div>
<div class="t" style="left:1881.0px;top:1125.0px;font-size:25px;color:#c8c8c8;font-weight:400;">Enabled</div>
<div class="t" style="left:2129.6px;top:1125.0px;font-size:25px;color:#c8c8c8;font-weight:400;letter-spacing:0.6px;word-spacing:-3px">2026-02-<span class="n1">1</span>8 03:20:52</div>
<div class="t" style="left:2483.0px;top:1125.0px;font-size:25px;color:#c8c8c8;font-weight:400;">296</div>
<div class="t" style="left:2732.8px;top:1125.0px;font-size:25px;color:#c8c8c8;font-weight:400;">Active</div>
<div class="r" style="left:518px;top:1186px;width:2488px;height:93px;background:#26272c;"></div>
<div class="r" style="left:518px;top:1279px;width:2488px;height:2px;background:#333331;"></div>
<svg class="r" style="left:542px;top:1204px" width="48" height="48" viewBox="0 0 48 48"><circle cx="24" cy="24" r="24" fill="#33cc74"/><path d="M24 11.5L13 24h6.5v11h9V24H35z" fill="#fff"/></svg>
<div class="t" style="left:619.0px;top:1205.6px;font-size:25px;color:#5b9cf0;font-weight:400;">key14</div>
<div class="t" style="left:619.0px;top:1244.9px;font-size:20px;color:#c8c8c8;font-weight:400;">CertMonitor</div>
<div class="t" style="left:855.5px;top:1219.9px;font-size:25px;color:#c8c8c8;font-weight:400;letter-spacing:0.6px;word-spacing:-3px">2025-04-06 23:<span class="n1">1</span>2:56</div>
<div class="t" style="left:1198.9px;top:1219.9px;font-size:25px;color:#c8c8c8;font-weight:400;letter-spacing:0.6px;word-spacing:-3px">2025-04-06 23:<span class="n1">1</span>2:56</div>
<div class="t" style="left:1549.0px;top:1219.9px;font-size:25px;color:#c8c8c8;font-weight:400;">-</div>
<div class="t" style="left:1881.0px;top:1219.9px;font-size:25px;color:#c8c8c8;font-weight:400;">Enabled</div>
<div class="t" style="left:2130.4px;top:1219.9px;font-size:25px;color:#c8c8c8;font-weight:400;">-</div>
<div class="t" style="left:2483.0px;top:1219.9px;font-size:25px;color:#c8c8c8;font-weight:400;">-</div>
<div class="t" style="left:2732.8px;top:1219.9px;font-size:25px;color:#c8c8c8;font-weight:400;">Active</div>
<div class="r" style="left:518px;top:1374px;width:2488px;height:2px;background:#333331;"></div>
<svg class="r" style="left:542px;top:1299px" width="48" height="48" viewBox="0 0 48 48"><circle cx="24" cy="24" r="24" fill="#33cc74"/><path d="M24 11.5L13 24h6.5v11h9V24H35z" fill="#fff"/></svg>
<div class="t" style="left:619.0px;top:1300.5px;font-size:25px;color:#5b9cf0;font-weight:400;">key15</div>
<div class="t" style="left:619.0px;top:1339.8px;font-size:20px;color:#c8c8c8;font-weight:400;">CertMonitor</div>
<div class="t" style="left:855.5px;top:1314.8px;font-size:25px;color:#c8c8c8;font-weight:400;letter-spacing:0.6px;word-spacing:-3px">2025-04-06 23:<span class="n1">1</span>3:03</div>
<div class="t" style="left:1198.9px;top:1314.8px;font-size:25px;color:#c8c8c8;font-weight:400;letter-spacing:0.6px;word-spacing:-3px">2025-04-06 23:<span class="n1">1</span>3:03</div>
<div class="t" style="left:1549.0px;top:1314.8px;font-size:25px;color:#c8c8c8;font-weight:400;">-</div>
<div class="t" style="left:1881.0px;top:1314.8px;font-size:25px;color:#c8c8c8;font-weight:400;">Enabled</div>
<div class="t" style="left:2130.4px;top:1314.8px;font-size:25px;color:#c8c8c8;font-weight:400;">-</div>
<div class="t" style="left:2483.0px;top:1314.8px;font-size:25px;color:#c8c8c8;font-weight:400;">-</div>
<div class="t" style="left:2732.8px;top:1314.8px;font-size:25px;color:#c8c8c8;font-weight:400;">Active</div>
<div class="r" style="left:518px;top:1376px;width:2488px;height:93px;background:#26272c;"></div>
<div class="r" style="left:518px;top:1469px;width:2488px;height:2px;background:#333331;"></div>
<svg class="r" style="left:542px;top:1394px" width="48" height="48" viewBox="0 0 48 48"><circle cx="24" cy="24" r="24" fill="#33cc74"/><path d="M24 11.5L13 24h6.5v11h9V24H35z" fill="#fff"/></svg>
<div class="t" style="left:619.0px;top:1395.4px;font-size:25px;color:#5b9cf0;font-weight:400;">key16</div>
<div class="t" style="left:619.0px;top:1434.7px;font-size:20px;color:#c8c8c8;font-weight:400;">CertMonitor</div>
<div class="t" style="left:855.5px;top:1409.7px;font-size:25px;color:#c8c8c8;font-weight:400;letter-spacing:0.6px;word-spacing:-3px">2025-04-06 23:<span class="n1">1</span>3:<span class="n1">1</span>0</div>
<div class="t" style="left:1198.9px;top:1409.7px;font-size:25px;color:#c8c8c8;font-weight:400;letter-spacing:0.6px;word-spacing:-3px">2025-04-06 23:<span class="n1">1</span>3:<span class="n1">1</span>0</div>
<div class="t" style="left:1549.0px;top:1409.7px;font-size:25px;color:#c8c8c8;font-weight:400;">-</div>
<div class="t" style="left:1881.0px;top:1409.7px;font-size:25px;color:#c8c8c8;font-weight:400;">Enabled</div>
<div class="t" style="left:2130.4px;top:1409.7px;font-size:25px;color:#c8c8c8;font-weight:400;">-</div>
<div class="t" style="left:2483.0px;top:1409.7px;font-size:25px;color:#c8c8c8;font-weight:400;">-</div>
<div class="t" style="left:2732.8px;top:1409.7px;font-size:25px;color:#c8c8c8;font-weight:400;">Active</div>
<div class="r" style="left:518px;top:1564px;width:2488px;height:2px;background:#333331;"></div>
<svg class="r" style="left:542px;top:1489px" width="48" height="48" viewBox="0 0 48 48"><circle cx="24" cy="24" r="24" fill="#33cc74"/><path d="M24 11.5L13 24h6.5v11h9V24H35z" fill="#fff"/></svg>
<div class="t" style="left:619.0px;top:1490.3px;font-size:25px;color:#5b9cf0;font-weight:400;">key17</div>
<div class="t" style="left:619.0px;top:1529.6px;font-size:20px;color:#c8c8c8;font-weight:400;">CertMonitor</div>
<div class="t" style="left:855.5px;top:1504.6px;font-size:25px;color:#c8c8c8;font-weight:400;letter-spacing:0.6px;word-spacing:-3px">2025-04-06 23:<span class="n1">1</span>3:<span class="n1">1</span>6</div>
<div class="t" style="left:1198.9px;top:1504.6px;font-size:25px;color:#c8c8c8;font-weight:400;letter-spacing:0.6px;word-spacing:-3px">2025-04-06 23:<span class="n1">1</span>3:<span class="n1">1</span>6</div>
<div class="t" style="left:1549.0px;top:1504.6px;font-size:25px;color:#c8c8c8;font-weight:400;">-</div>
<div class="t" style="left:1881.0px;top:1504.6px;font-size:25px;color:#c8c8c8;font-weight:400;">Enabled</div>
<div class="t" style="left:2130.4px;top:1504.6px;font-size:25px;color:#c8c8c8;font-weight:400;">-</div>
<div class="t" style="left:2483.0px;top:1504.6px;font-size:25px;color:#c8c8c8;font-weight:400;">-</div>
<div class="t" style="left:2732.8px;top:1504.6px;font-size:25px;color:#c8c8c8;font-weight:400;">Active</div>
<div class="r" style="left:518px;top:1566px;width:2488px;height:93px;background:#26272c;"></div>
<div class="r" style="left:518px;top:1659px;width:2488px;height:2px;background:#333331;"></div>
<svg class="r" style="left:542px;top:1584px" width="48" height="48" viewBox="0 0 48 48"><circle cx="24" cy="24" r="24" fill="#33cc74"/><path d="M24 11.5L13 24h6.5v11h9V24H35z" fill="#fff"/></svg>
<div class="t" style="left:619.0px;top:1585.2px;font-size:25px;color:#5b9cf0;font-weight:400;">key18</div>
<div class="t" style="left:619.0px;top:1624.5px;font-size:20px;color:#c8c8c8;font-weight:400;">CertMonitor</div>
<div class="t" style="left:855.5px;top:1599.5px;font-size:25px;color:#c8c8c8;font-weight:400;letter-spacing:0.6px;word-spacing:-3px">2025-04-06 23:<span class="n1">1</span>3:22</div>
<div class="t" style="left:1198.9px;top:1599.5px;font-size:25px;color:#c8c8c8;font-weight:400;letter-spacing:0.6px;word-spacing:-3px">2025-04-06 23:<span class="n1">1</span>3:22</div>
<div class="t" style="left:1549.0px;top:1599.5px;font-size:25px;color:#c8c8c8;font-weight:400;">-</div>
<div class="t" style="left:1881.0px;top:1599.5px;font-size:25px;color:#c8c8c8;font-weight:400;">Enabled</div>
<div class="t" style="left:2130.4px;top:1599.5px;font-size:25px;color:#c8c8c8;font-weight:400;">-</div>
<div class="t" style="left:2483.0px;top:1599.5px;font-size:25px;color:#c8c8c8;font-weight:400;">-</div>
<div class="t" style="left:2732.8px;top:1599.5px;font-size:25px;color:#c8c8c8;font-weight:400;">Active</div>
<div class="r" style="left:3006px;top:505px;width:16px;height:856px;background:#66718b;border-radius:8px"></div>
</div></body></html>
